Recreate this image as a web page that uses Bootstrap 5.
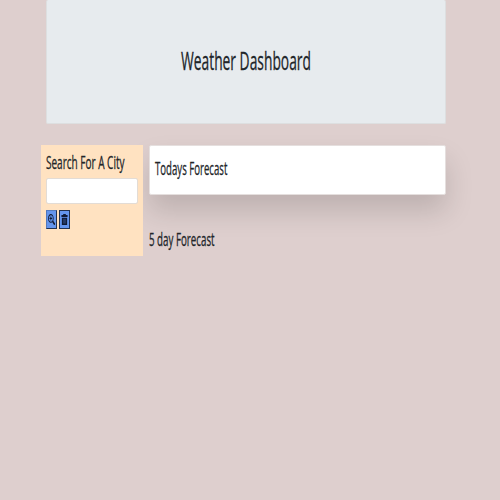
<!DOCTYPE html>
<html lang="en">
<head>
<meta charset="utf-8">
<meta name="viewport" content="width=device-width, initial-scale=1">
<title>Weather Dashboard</title>
<link href="https://cdn.jsdelivr.net/npm/bootstrap@5.3.0/dist/css/bootstrap.min.css" rel="stylesheet">
<style>
body { background: #decfce; font-family: "Open Sans", "Noto Sans", sans-serif; color: #212529; min-height: 500px; overflow: hidden; }
.page { width: 405.4px; margin-left: 40.6px; }
.hero { height: 124px; margin-left: 5px; background: #e7ebee; border: 1px solid #dddfe0; border-top: 0; border-radius: 2px; padding-top: 43px; }
.squeeze { display: inline-block; white-space: nowrap; transform: scaleX(.542); transform-origin: left center; font-weight: 500; margin: 0; -webkit-text-stroke: .3px #212529; }
.hero .squeeze { font-size: 25.5px; line-height: 34px; margin-left: 134.3px; }
.search-panel { width: 102.6px; height: 111px; background: #ffe2c1; padding: 4px 5px 0 5px; }
.small-title { display: block; font-size: 18px; line-height: 26px; width: max-content; }
.search-panel .squeeze { transform: scaleX(.556); }
.search-panel .form-control { height: 26px; width: 92.4px; border-color: #e3dcd5; border-radius: 2px; margin-top: 3px; }
.tools { margin-top: 6px; gap: 2px; }
.tool-btn { width: 11px; height: 19px; padding: 0; border: 1px solid #23324f; border-radius: 0; background: #6495ed; }
.tool-btn:first-child { border-color: #5279bd #23324f #23324f #5279bd; }
.tool-btn svg { width: 7px; height: 11px; display: block; }
.today { height: 50px; border: 1px solid #e5dfde; border-radius: 2px; padding: 9px 5px 0; box-shadow: 0 16px 28px rgba(0,0,0,.15); }
.today .squeeze { transform: scaleX(.535); }
.five-day { margin-top: 31px; }
</style>
</head>
<body>
<main class="page">
  <header class="hero"><h1 class="squeeze">Weather Dashboard</h1></header>
  <div class="d-flex align-items-start" style="margin-top:21px">
    <aside class="search-panel flex-shrink-0 position-relative z-1">
      <h2 class="squeeze small-title">Search For A City</h2>
      <input type="text" class="form-control" aria-label="City">
      <div class="d-flex tools">
        <button class="tool-btn d-flex align-items-center justify-content-center" aria-label="Search">
          <svg viewBox="0 0 16 16" preserveAspectRatio="none" fill="none" stroke="#101b36" stroke-width="1.8"><circle cx="6.5" cy="6.5" r="5.5"/><path d="M10.5 10.5 15.5 15.5" stroke-width="3"/><path d="M3.5 6.5h6M6.5 3.5v6"/></svg>
        </button>
        <button class="tool-btn d-flex align-items-center justify-content-center" aria-label="Clear">
          <svg viewBox="0 0 16 16" preserveAspectRatio="none"><path fill="#101b36" d="M5 0h6v1.5h4v3H1v-3h4zM2 5.5h12V16H2z"/><path stroke="#39568f" stroke-width="1" d="M5.5 7v7M8 7v7M10.5 7v7"/></svg>
        </button>
      </div>
    </aside>
    <section class="flex-grow-1" style="margin-left:5.4px">
      <div class="card today"><h2 class="squeeze small-title">Todays Forecast</h2></div>
      <h2 class="squeeze small-title five-day">5 day Forecast</h2>
    </section>
  </div>
</main>
</body>
</html>
